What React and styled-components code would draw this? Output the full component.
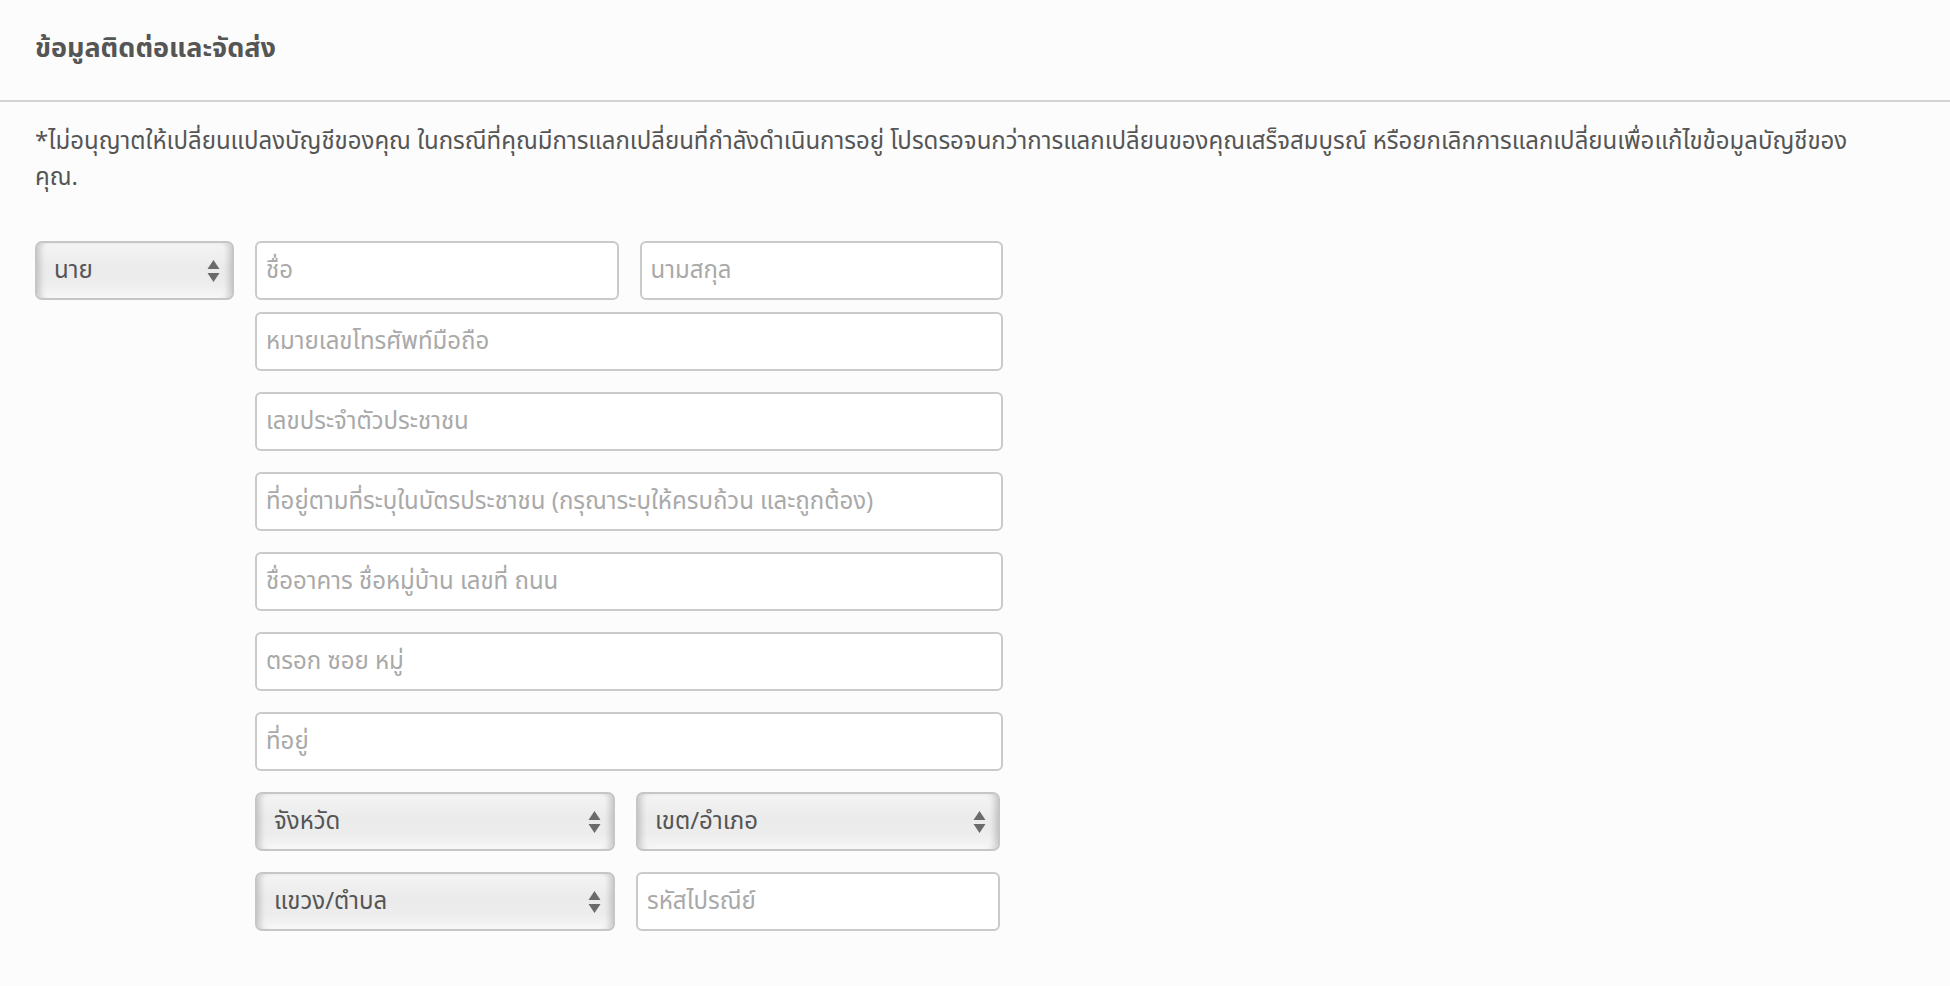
import React from 'react'
import styled, { createGlobalStyle } from 'styled-components'

const GlobalStyle = createGlobalStyle`
  html, body {
    margin: 0;
    padding: 0;
    background: #fcfcfc;
  }
  body {
    font-family: "Noto Sans Thai", "Noto Sans Thai UI", "Loma", "Garuda", "Noto Sans", sans-serif;
    color: #555;
  }
  * {
    box-sizing: border-box;
  }
`

const Page = styled.div`
  width: 1950px;
  min-height: 986px;
`

const Header = styled.div`
  height: 102px;
  padding: 0 35px 3px;
  display: flex;
  align-items: center;
  border-bottom: 2px solid #d2d2d2;
`

const Title = styled.h2`
  margin: 0;
  font-size: 27px;
  font-weight: 700;
  color: #555;
`

const Body = styled.div`
  padding: 22px 35px 0 35px;
`

const Notice = styled.p`
  margin: 0;
  max-width: 1835px;
  font-size: 24px;
  line-height: 36px;
  color: #555;
`

const Form = styled.div`
  margin-top: 45px;
  display: grid;
  grid-template-columns: 200px 748px;
  column-gap: 20px;
  align-items: start;
`

const Fields = styled.div`
  display: flex;
  flex-direction: column;
`

const Row = styled.div`
  display: grid;
  grid-template-columns: ${p => p.cols || '1fr'};
  column-gap: 21px;
  margin-top: ${p => p.gap || 21}px;
  &:first-child {
    margin-top: 0;
  }
`

const Input = styled.input`
  height: 59px;
  width: 100%;
  border: 2px solid #cacaca;
  border-radius: 6px;
  background: #fff;
  padding: 0 9px;
  font-family: inherit;
  font-size: 24px;
  color: #555;
  outline: none;
  &::placeholder {
    color: #a9a9a9;
  }
`

const SelectWrap = styled.div`
  position: relative;
  height: 59px;
  width: ${p => p.width || '100%'};
`

const Select = styled.select`
  appearance: none;
  -webkit-appearance: none;
  width: 100%;
  height: 100%;
  border: 2px solid #c6c6c6;
  border-radius: 7px;
  padding: 0 40px 0 17px;
  font-family: inherit;
  font-size: 24px;
  color: #555;
  outline: none;
  background: linear-gradient(#f4f4f4 0%, #ebebeb 45%, #ededed 75%, #f7f7f7 100%);
  box-shadow:
    inset 7px 0 6px -4px rgba(0, 0, 0, 0.18),
    inset -7px 0 6px -4px rgba(0, 0, 0, 0.18),
    inset 0 -3px 3px -2px rgba(255, 255, 255, 0.9);
`

const Arrow = styled.svg`
  position: absolute;
  right: 14px;
  top: 50%;
  transform: translateY(-50%);
  pointer-events: none;
`

function Dropdown({ label, width }) {
  return (
    <SelectWrap width={width}>
      <Select defaultValue={label}>
        <option>{label}</option>
      </Select>
      <Arrow width="13" height="24" viewBox="0 0 13 24">
        <path d="M6.5 1 L12.5 10 L0.5 10 Z" fill="#6b6b6b" />
        <path d="M6.5 23 L12.5 14 L0.5 14 Z" fill="#6b6b6b" />
      </Arrow>
    </SelectWrap>
  )
}

export default function App() {
  return (
    <Page>
      <GlobalStyle />
      <Header>
        <Title>ข้อมูลติดต่อและจัดส่ง</Title>
      </Header>
      <Body>
        <Notice>
          *ไม่อนุญาตให้เปลี่ยนแปลงบัญชีของคุณ ในกรณีที่คุณมีการแลกเปลี่ยนที่กำลังดำเนินการอยู่ โปรดรอจนกว่าการแลกเปลี่ยนของคุณเสร็จสมบูรณ์ หรือยกเลิกการแลกเปลี่ยนเพื่อแก้ไขข้อมูลบัญชีของคุณ.
        </Notice>
        <Form>
          <Dropdown label="นาย" width="199px" />
          <Fields>
            <Row cols="1fr 1fr">
              <Input placeholder="ชื่อ" />
              <Input placeholder="นามสกุล" />
            </Row>
            <Row gap={12}>
              <Input placeholder="หมายเลขโทรศัพท์มือถือ" />
            </Row>
            <Row>
              <Input placeholder="เลขประจำตัวประชาชน" />
            </Row>
            <Row>
              <Input placeholder="ที่อยู่ตามที่ระบุในบัตรประชาชน (กรุณาระบุให้ครบถ้วน และถูกต้อง)" />
            </Row>
            <Row>
              <Input placeholder="ชื่ออาคาร ชื่อหมู่บ้าน เลขที่ ถนน" />
            </Row>
            <Row>
              <Input placeholder="ตรอก ซอย หมู่" />
            </Row>
            <Row>
              <Input placeholder="ที่อยู่" />
            </Row>
            <Row cols="360px 364px">
              <Dropdown label="จังหวัด" />
              <Dropdown label="เขต/อำเภอ" />
            </Row>
            <Row cols="360px 364px">
              <Dropdown label="แขวง/ตำบล" />
              <Input placeholder="รหัสไปรณีย์" />
            </Row>
          </Fields>
        </Form>
      </Body>
    </Page>
  )
}
